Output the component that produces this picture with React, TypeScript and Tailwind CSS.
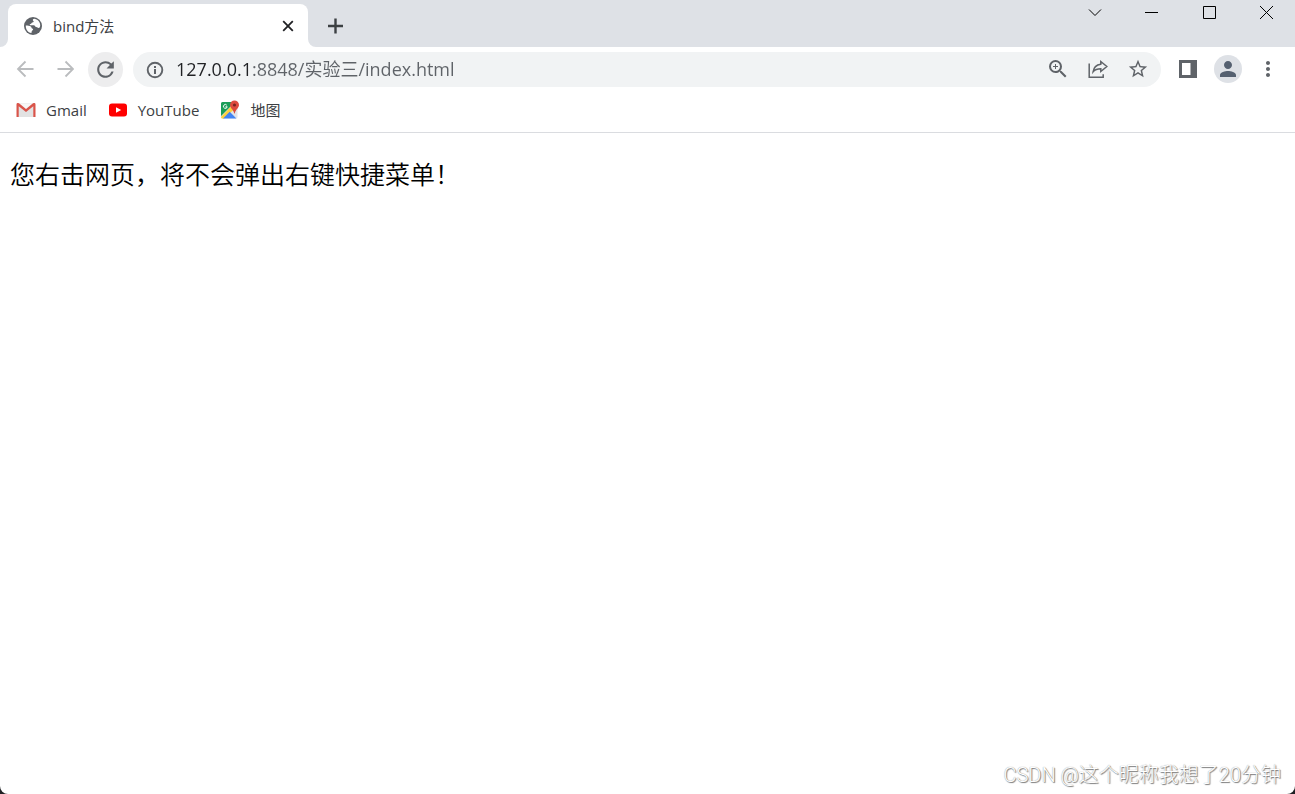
import React from 'react';
import { MdMoreVert, MdPerson, MdRefresh, MdStarOutline, MdZoomIn } from 'react-icons/md';

interface IconButtonProps {
  label: string;
  className?: string;
  children: React.ReactNode;
}

const IconButton: React.FC<IconButtonProps> = ({ label, className = '', children }) => (
  <button
    type="button"
    aria-label={label}
    className={`flex size-[35px] shrink-0 items-center justify-center rounded-full pr-px pb-px ${className}`}
  >
    {children}
  </button>
);

const WindowButton: React.FC<IconButtonProps> = ({ label, children }) => (
  <button type="button" aria-label={label} className="flex h-6 w-[57px] items-center justify-center">
    <svg width="15" height="14" viewBox="0 0 15 14" fill="none" stroke="#000">
      {children}
    </svg>
  </button>
);

const GlobeIcon = () => (
  <svg width="20" height="20" viewBox="0 0 20 20">
    <circle cx="10" cy="10" r="9" fill="#5f6368" />
    <path
      d="M11.500 2.800c-2 .2-2 1.700-1.100 2.200.9.600-.1 1.400-1 1.400-1 0-.8 1.600-2 1.600-.9 0-.9 1.200 0 1.200h3.400c1.300 0 1.300 1.900 2.400 1.900 1.200 0 1.500 1 2.600.9.900-.1 1.200-1 1.400-2.200.3-3-1.700-6-5.700-7z"
      fill="#fff"
    />
    <path
      d="M2.800 9.500c1.700.1 3.900.2 5 1 .9.700.5 1.700 1.500 2 1.200.4 1 1.600 0 2-.8.400-.5 1.500-.9 2.600-3.500-.7-5.800-3.800-5.600-7.600z"
      fill="#fff"
    />
  </svg>
);

const InfoIcon = () => (
  <svg width="20" height="20" viewBox="0 0 20 20" className="shrink-0">
    <circle cx="10" cy="10" r="7.300" fill="none" stroke="#5f6368" strokeWidth="1.900" />
    <path d="M9 9h2v5H9zM9 6h2v2H9z" fill="#5f6368" />
  </svg>
);

const GmailIcon = () => (
  <svg width="20" height="20" viewBox="0 0 20 20">
    <path d="M1 3.500h18v13.500H1z" fill="#e2e2e2" />
    <path d="M2 4l8 7 8-7z" fill="#f7f7f7" />
    <path
      d="M.5 4.500a1.500 1.500 0 0 1 2.500-1.200l7 5.700 7-5.700a1.500 1.500 0 0 1 2.500 1.200V17h-2.200V6.300L10 12 2.700 6.300V17H.5z"
      fill="#d9544a"
    />
  </svg>
);

const YouTubeIcon = () => (
  <svg width="20" height="20" viewBox="0 0 20 20">
    <rect x="1" y="3.500" width="18" height="13" rx="3" fill="#f00" />
    <path d="M8 7.300l5.200 2.700L8 12.700z" fill="#fff" />
  </svg>
);

const MapsIcon = () => (
  <svg width="20" height="20" viewBox="0 0 20 20">
    <rect x="1" y="2" width="16.500" height="16.500" rx="1.500" fill="#e1e4e8" />
    <path d="M2.500 2H15L1 16V3.500A1.500 1.500 0 0 1 2.500 2z" fill="#1b9d58" />
    <path d="M12 5.500l3 3L4 18.500H2.500A1.500 1.500 0 0 1 1 17z" fill="#fdd13e" />
    <path d="M3 18.500l6.700-6.700 6.700 6.700z" fill="#4284f3" />
    <path d="M6.800 5.200A1.900 1.900 0 1 0 7.200 6.800H5.500" fill="none" stroke="#fff" strokeWidth="1" />
    <path
      d="M14.500.500a4.500 4.500 0 0 1 4.500 4.500c0 3.200-3.600 4.400-4.200 8.500h-.6c-.6-4.100-4.200-5.300-4.200-8.500A4.500 4.500 0 0 1 14.500.500z"
      fill="#dd4b3e"
    />
    <circle cx="14.500" cy="5" r="1.600" fill="#7a2620" />
  </svg>
);

const bookmarks = [
  { name: 'Gmail', icon: <GmailIcon /> },
  { name: 'YouTube', icon: <YouTubeIcon /> },
  { name: '地图', icon: <MapsIcon /> },
];

const TabStrip = () => (
  <div className="flex h-[47px] items-end bg-[#dee1e6]">
    <svg width="8" height="8" className="shrink-0">
      <path d="M8 0v8H0a8 8 0 0 0 8-8z" fill="#fff" />
    </svg>
    <div className="flex h-[43px] w-[300px] items-center rounded-t-lg bg-white pr-3 pl-[15px] text-[#3c4043]">
      <GlobeIcon />
      <span className="ml-[10px] flex-1 text-[15px] leading-5">bind方法</span>
      <button type="button" aria-label="关闭标签页" className="flex size-4 items-center justify-center">
        <svg width="12" height="12" viewBox="0 0 12 12" stroke="#202124" strokeWidth="1.800">
          <path d="M1.200 1.200l9.600 9.600M10.800 1.200l-9.600 9.600" />
        </svg>
      </button>
    </div>
    <svg width="8" height="8" className="shrink-0">
      <path d="M0 0v8h8a8 8 0 0 1-8-8z" fill="#fff" />
    </svg>
    <button type="button" aria-label="新标签页" className="ml-[3px] flex h-[43px] w-8 items-center justify-center">
      <svg width="16" height="16" viewBox="0 0 16 16" stroke="#3c4043" strokeWidth="2.400">
        <path d="M8.500.500v15M1 8h15" />
      </svg>
    </button>
    <div className="ml-auto flex self-start">
      <WindowButton label="搜索标签页">
        <path d="M1 4.500l6 6 6-6" />
      </WindowButton>
      <WindowButton label="最小化">
        <path d="M0 7.500h13" />
      </WindowButton>
      <WindowButton label="最大化">
        <path d="M1.500 1.500h12v12h-12z" />
      </WindowButton>
      <WindowButton label="关闭">
        <path d="M1 1l13 13M14 1L1 14" />
      </WindowButton>
    </div>
  </div>
);

const Toolbar = () => (
  <div className="flex h-[45px] items-center gap-[5px] pr-[9px] pl-2 text-[#5f6368]">
    <IconButton label="后退">
      <svg width="18" height="18" viewBox="0 0 18 18" fill="none" stroke="#babcbe" strokeWidth="1.800">
        <path d="M17.500 9H2M9.500 1.500L2 9l7.500 7.500" />
      </svg>
    </IconButton>
    <IconButton label="前进">
      <svg width="18" height="18" viewBox="0 0 18 18" fill="none" stroke="#babcbe" strokeWidth="1.800">
        <path d="M1.500 9H17M9.500 1.500L17 9l-7.500 7.500" />
      </svg>
    </IconButton>
    <IconButton label="重新加载" className="bg-[#ededee]">
      <MdRefresh size={25} />
    </IconButton>

    {/* Address bar, host part is darker than the rest */}
    <form className="ml-[5px] flex h-[35px] min-w-0 flex-1 items-center gap-[5px] rounded-full bg-[#f1f3f4] pr-[5px] pl-3">
      <InfoIcon />
      <input
        type="text"
        aria-label="地址"
        defaultValue="127.0.0.1:8848/实验三/index.html"
        className="mb-[2px] ml-[6px] min-w-0 flex-1 bg-[linear-gradient(90deg,#202124_74px,#5f6368_74px)] bg-clip-text text-lg leading-6 text-transparent outline-none"
      />
      <IconButton label="缩放">
        <MdZoomIn size={24} />
      </IconButton>
      <IconButton label="分享">
        <svg width="20" height="20" viewBox="0 0 20 20" fill="none" stroke="#5f6368" strokeWidth="1.500">
          <path d="M1.200 4.500v13.700h14v-3" />
          <path d="M12.800 2.500l6 5-6 5V9.800c-3.500 0-5.800.8-7.700 3 .5-4 3-7 7.700-7.600z" />
        </svg>
      </IconButton>
      <IconButton label="添加书签">
        <MdStarOutline size={22} />
      </IconButton>
    </form>

    <IconButton label="侧边栏" className="ml-[5px]">
      <svg width="18" height="18" viewBox="0 0 18 18">
        <path d="M0 0h18v18H0z" fill="#5f6368" />
        <path d="M3 3h8.500v12H3z" fill="#fff" />
      </svg>
    </IconButton>
    <IconButton label="个人资料">
      <span className="flex size-7 items-center justify-center rounded-full bg-[#dee1e6] text-[#556070]">
        <MdPerson size={24} />
      </span>
    </IconButton>
    <IconButton label="更多">
      <MdMoreVert size={24} />
    </IconButton>
  </div>
);

const BookmarksBar = () => (
  <nav className="flex h-[41px] items-center gap-[21px] border-b border-[#dadce0] px-4 pb-1 text-[15px] leading-5 text-[#3c4043]">
    {bookmarks.map((item) => (
      <a key={item.name} href="#" className="flex items-center gap-[10px]">
        {item.icon}
        {item.name}
      </a>
    ))}
  </nav>
);

const App = () => (
  <div
    lang="zh-CN"
    className="min-h-screen bg-[#202124] font-['Open_Sans','Noto_Sans_CJK_SC',sans-serif]"
  >
    <div className="flex min-h-screen flex-col overflow-hidden rounded-b-lg bg-white">
      <TabStrip />
      <Toolbar />
      <BookmarksBar />
      <main className="flex flex-1 flex-col justify-between">
        <p className="mt-[23px] ml-[10px] text-[25px] leading-9 font-[350] text-black">
          您右击网页，将不会弹出右键快捷菜单！
        </p>
        <p className="mr-[14px] mb-[5px] self-end font-['Roboto','Noto_Sans_CJK_SC',sans-serif] text-xl leading-7 font-light text-white [text-shadow:1px_1px_1px_#777,0_0_1px_#888]">
          CSDN @这个昵称我想了20分钟
        </p>
      </main>
    </div>
  </div>
);

export default App;
